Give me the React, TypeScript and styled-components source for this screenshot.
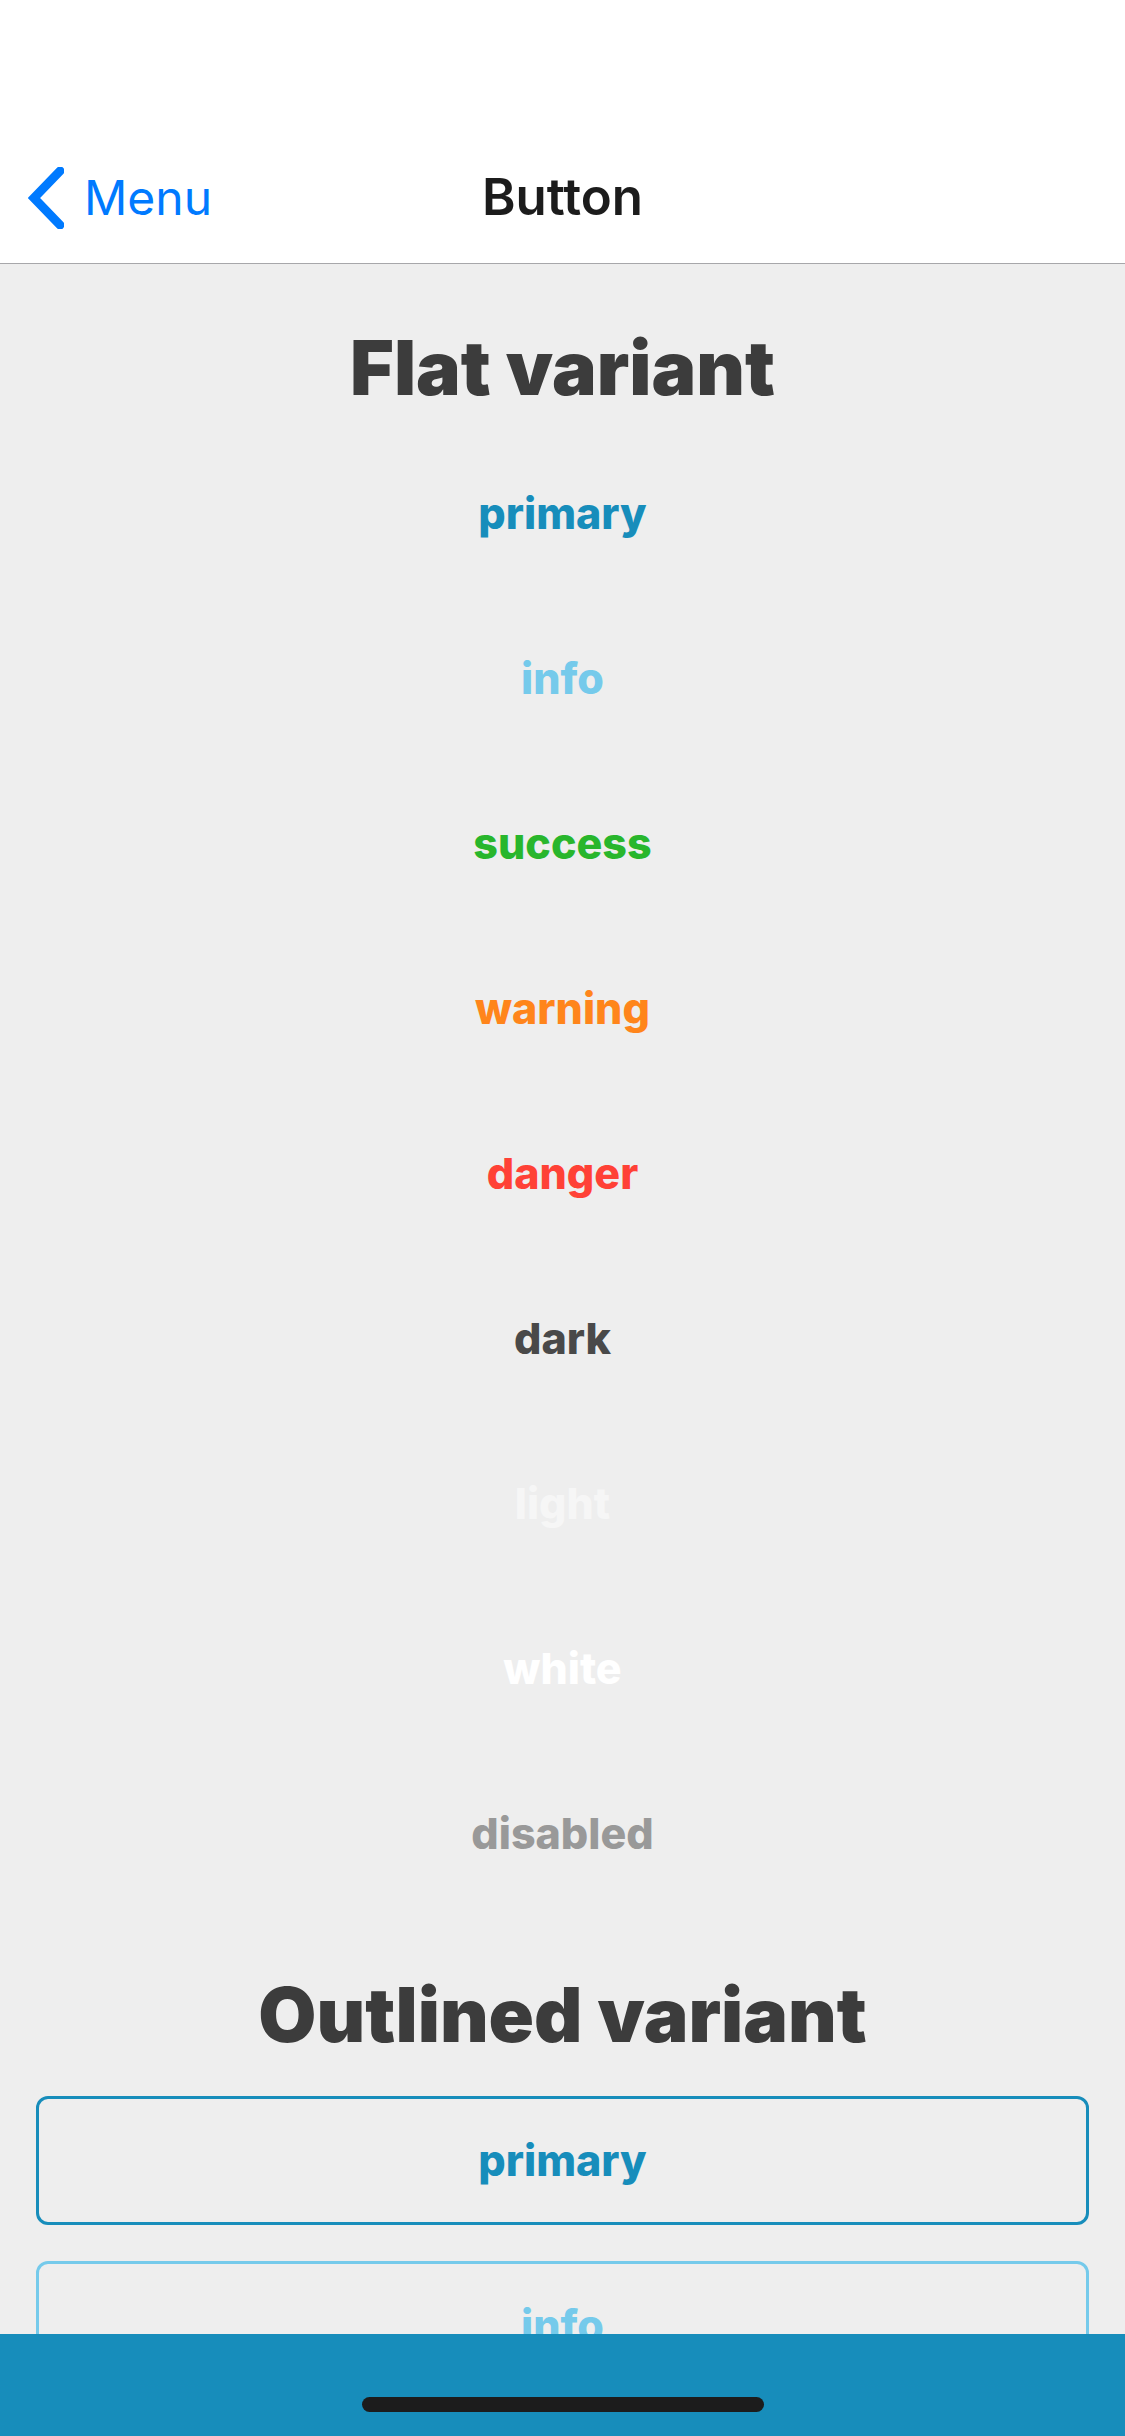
import React from 'react';
import styled, { createGlobalStyle } from 'styled-components';

const GlobalStyle = createGlobalStyle`
  *, *::before, *::after { box-sizing: border-box; }
  body { margin: 0; font-family: Inter, Roboto, sans-serif; }
`;

const Screen = styled.div`
  height: 100vh;
  display: flex;
  flex-direction: column;
  background: #eeeeee;
`;

const Header = styled.header`
  flex: none;
  display: grid;
  grid-template-columns: 1fr auto 1fr;
  align-items: center;
  height: 264px;
  padding: 132px 28px 0;
  background: #ffffff;
  border-bottom: 1px solid #a7a7aa;
`;

const BackLink = styled.a`
  display: flex;
  align-items: center;
  gap: 20px;
  justify-self: start;
  color: #007aff;
  font-size: 48px;
  line-height: 60px;
  text-decoration: none;
`;

const ScreenTitle = styled.h1`
  margin: 0;
  padding-bottom: 2px;
  font-size: 51px;
  line-height: 60px;
  font-weight: 600;
  color: #1c1c1c;
`;

const Content = styled.main`
  flex: 1;
  min-height: 0;
  display: flex;
  flex-direction: column;
  gap: 36px;
  overflow-y: auto;
  scrollbar-width: none;
  padding: 23px 36px 0;
`;

const Group = styled.section`
  padding-top: 36px;
`;

const GroupTitle = styled.h2`
  margin: 0 0 36px;
  font-size: 75px;
  line-height: 90px;
  font-weight: 900;
  text-align: center;
  color: #3c3c3c;
`;

const ButtonList = styled.div`
  display: flex;
  flex-direction: column;
  gap: 36px;
`;

const Button = styled.button<{ $color: string; $outlined?: boolean }>`
  height: 129px;
  padding: 0 36px 2px;
  border: 3px solid ${p => (p.$outlined ? p.$color : 'transparent')};
  border-radius: 12px;
  background: transparent;
  color: ${p => p.$color};
  font-family: inherit;
  font-size: 43px;
  line-height: 50px;
  font-weight: 800;
`;

const Footer = styled.footer`
  flex: none;
  display: flex;
  justify-content: center;
  align-items: flex-end;
  height: 102px;
  padding-bottom: 24px;
  background: #178dbb;
`;

const HomeIndicator = styled.div`
  width: 402px;
  height: 15px;
  border-radius: 8px;
  background: #1c1c1c;
`;

type Variant = { name: string; color: string };

const flatVariants: Variant[] = [
  { name: 'primary', color: '#178dbb' },
  { name: 'info', color: '#75caeb' },
  { name: 'success', color: '#28b62c' },
  { name: 'warning', color: '#ff851b' },
  { name: 'danger', color: '#ff4136' },
  { name: 'dark', color: '#494949' },
  { name: 'light', color: '#f6f6f6' },
  { name: 'white', color: '#ffffff' },
  { name: 'disabled', color: '#999999' },
];

const outlinedVariants: Variant[] = flatVariants.slice(0, 2);

type VariantGroupProps = { title: string; variants: Variant[]; outlined?: boolean };

function VariantGroup({ title, variants, outlined }: VariantGroupProps) {
  return (
    <Group>
      <GroupTitle>{title}</GroupTitle>
      <ButtonList>
        {variants.map(v => (
          <Button key={v.name} type="button" $color={v.color} $outlined={outlined} disabled={v.name === 'disabled'}>
            {v.name}
          </Button>
        ))}
      </ButtonList>
    </Group>
  );
}

export default function App() {
  return (
    <Screen>
      <GlobalStyle />
      <Header>
        <BackLink href="#menu">
          <svg width="36" height="62" viewBox="0 0 36 62" fill="none" stroke="currentColor" strokeWidth="9" strokeLinecap="round" aria-hidden="true">
            <path d="M32 4 6 31l26 27" />
          </svg>
          Menu
        </BackLink>
        <ScreenTitle>Button</ScreenTitle>
      </Header>
      <Content>
        <VariantGroup title="Flat variant" variants={flatVariants} />
        <VariantGroup title="Outlined variant" variants={outlinedVariants} outlined />
      </Content>
      <Footer>
        <HomeIndicator />
      </Footer>
    </Screen>
  );
}
